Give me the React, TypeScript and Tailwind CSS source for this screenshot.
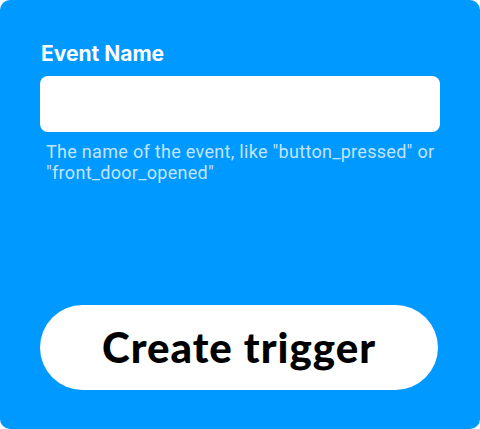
export default function App() {
  return (
    <div className="w-[480px] h-[429px] bg-white">
      <div className="h-full rounded-[10px] bg-[#0099ff] px-10 pt-[42px] font-['Lato','Liberation_Sans',sans-serif]">
        <label className="block pl-px font-['Inter',sans-serif] text-[21px] font-bold leading-6 text-white">
          Event Name
        </label>
        <input
          type="text"
          className="mt-[10px] block h-14 w-full rounded-lg bg-white px-4 text-lg text-black outline-none"
        />
        <p className="mt-[9px] pl-1.5 font-['Roboto',sans-serif] text-[18px] leading-[21px] tracking-[0.3px] text-[#c2e5ff]">
          The name of the event, like "button_pressed" or "front_door_opened"
        </p>
        <button className="mt-[122px] flex h-[85px] w-[398px] items-center justify-center rounded-full bg-white text-[42px] font-black tracking-[1px] text-black">
          Create trigger
        </button>
      </div>
    </div>
  );
}
